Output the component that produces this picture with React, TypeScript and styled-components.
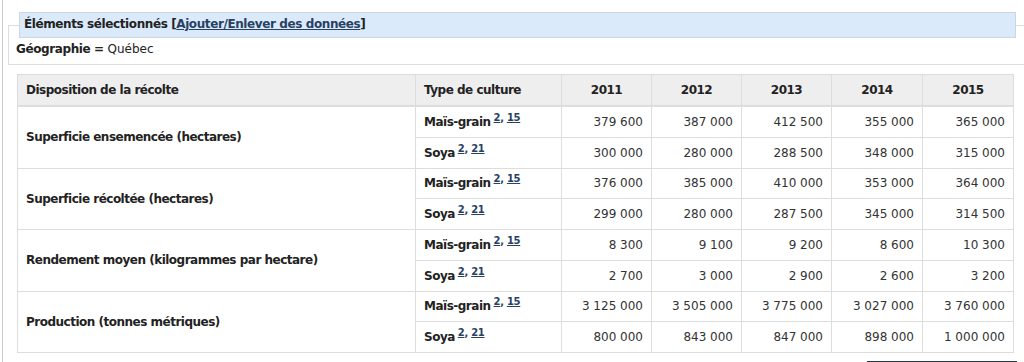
import styled, { createGlobalStyle } from 'styled-components';

const GlobalStyle = createGlobalStyle`
  body {
    margin: 0;
    background: #fff;
    font-family: "DejaVu Sans", Verdana, sans-serif;
    font-size: 12px;
    color: #333;
  }
`;

const Page = styled.div`
  margin-left: 2px;
  border-left: 1px solid #ccc;
  height: 362px;
  overflow: hidden;
`;

const Selection = styled.fieldset`
  margin: 12px -30px 0 5px;
  padding: 0 37px 7px 7px;
  border: 1px solid #ddd;
  min-width: 0;
`;

const Legend = styled.legend`
  box-sizing: border-box;
  width: calc(100% - 3px);
  margin-left: 3px;
  padding: 5px 4px 6px;
  line-height: 13px;
  background: #dbeafb;
  border: 1px solid #cdd6e0;
  font-weight: bold;
  letter-spacing: -0.4px;
  color: #222;
`;

const Link = styled.a`
  color: #284162;
  text-decoration: underline;
`;

const Geo = styled.div`
  margin-top: 3px;
  line-height: 16px;
  color: #222;

  b {
    letter-spacing: -0.4px;
  }
`;

const Table = styled.table`
  margin: 9px 0 0 14px;
  width: 996px;
  border-collapse: collapse;
  table-layout: fixed;
  border: 1px solid #ddd;
`;

const HeadCell = styled.th<{ $align?: string }>`
  height: 30px;
  padding: 0 8px;
  background: #eee;
  border: 1px solid #ddd;
  border-bottom: 2px solid #ddd;
  text-align: ${p => p.$align ?? 'center'};
  font-weight: bold;
  letter-spacing: -0.5px;
  color: #222;
`;

const LabelCell = styled.th`
  padding: 0 8px;
  border: 1px solid #ddd;
  text-align: left;
  font-weight: bold;
  letter-spacing: -0.5px;
  color: #222;
`;

const CropCell = styled.th`
  height: 29.75px;
  padding: 0 8px;
  border: 1px solid #ddd;
  text-align: left;
  font-weight: bold;
  letter-spacing: -0.5px;
  color: #222;
  white-space: nowrap;
`;

const Sup = styled.sup`
  font-size: 10px;
  font-weight: bold;
  letter-spacing: -0.3px;
  margin-left: 3px;
  vertical-align: 5px;
  line-height: 0;
  color: #284162;
`;

const NumCell = styled.td`
  padding: 0 8px;
  border: 1px solid #ddd;
  text-align: right;
  white-space: nowrap;
`;

const Footer = styled.div`
  display: flex;
  justify-content: flex-end;
  padding: 8px 7px 0 0;
`;

const TopButton = styled.div`
  width: 150px;
  height: 30px;
  background: #26374a;
`;

const years = ['2011', '2012', '2013', '2014', '2015'];

const crops = [
  { name: 'Maïs-grain', notes: ['2', '15'] },
  { name: 'Soya', notes: ['2', '21'] },
];

const rows = [
  {
    label: 'Superficie ensemencée (hectares)',
    values: [
      ['379 600', '387 000', '412 500', '355 000', '365 000'],
      ['300 000', '280 000', '288 500', '348 000', '315 000'],
    ],
  },
  {
    label: 'Superficie récoltée (hectares)',
    values: [
      ['376 000', '385 000', '410 000', '353 000', '364 000'],
      ['299 000', '280 000', '287 500', '345 000', '314 500'],
    ],
  },
  {
    label: 'Rendement moyen (kilogrammes par hectare)',
    values: [
      ['8 300', '9 100', '9 200', '8 600', '10 300'],
      ['2 700', '3 000', '2 900', '2 600', '3 200'],
    ],
  },
  {
    label: 'Production (tonnes métriques)',
    values: [
      ['3 125 000', '3 505 000', '3 775 000', '3 027 000', '3 760 000'],
      ['800 000', '843 000', '847 000', '898 000', '1 000 000'],
    ],
  },
];

const colWidths = [398, 146, 90, 90, 90, 91, 91];

export default function App() {
  return (
    <>
      <GlobalStyle />
      <Page>
        <Selection>
          <Legend>
            Éléments sélectionnés [<Link href="#">Ajouter/Enlever des données</Link>]
          </Legend>
          <Geo>
            <b>Géographie =</b> Québec
          </Geo>
        </Selection>
        <Table>
          <colgroup>
            {colWidths.map((w, i) => (
              <col key={i} style={{ width: w }} />
            ))}
          </colgroup>
          <thead>
            <tr>
              <HeadCell $align="left">Disposition de la récolte</HeadCell>
              <HeadCell $align="left">Type de culture</HeadCell>
              {years.map(y => (
                <HeadCell key={y}>{y}</HeadCell>
              ))}
            </tr>
          </thead>
          <tbody>
            {rows.map(row =>
              crops.map((crop, ci) => (
                <tr key={row.label + crop.name}>
                  {ci === 0 && <LabelCell rowSpan={2}>{row.label}</LabelCell>}
                  <CropCell>
                    {crop.name}
                    <Sup>
                      <Link href="#">{crop.notes[0]}</Link>, <Link href="#">{crop.notes[1]}</Link>
                    </Sup>
                  </CropCell>
                  {row.values[ci].map((v, vi) => (
                    <NumCell key={vi}>{v}</NumCell>
                  ))}
                </tr>
              ))
            )}
          </tbody>
        </Table>
        <Footer>
          <TopButton />
        </Footer>
      </Page>
    </>
  );
}
